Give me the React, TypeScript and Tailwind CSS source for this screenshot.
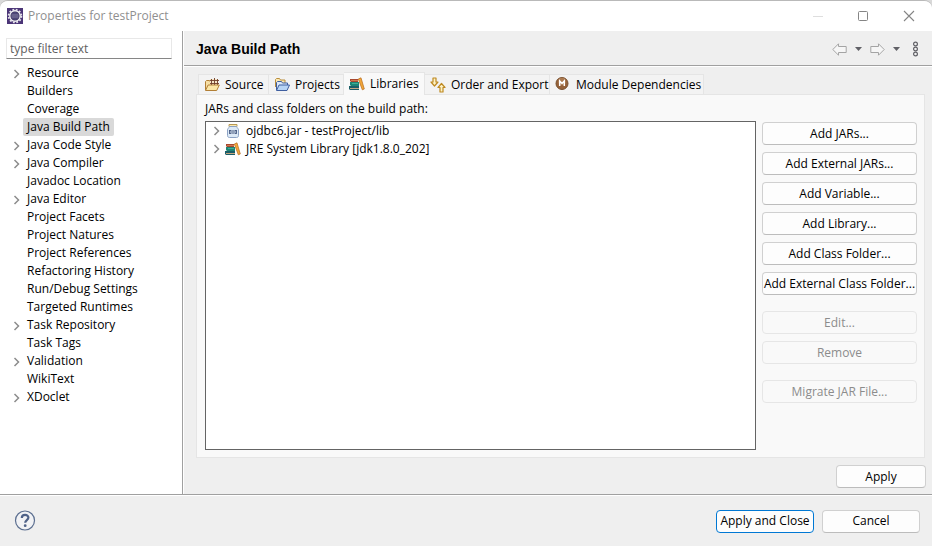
import { useState } from "react";

const pages = [
  { name: "Resource", open: true },
  { name: "Builders" },
  { name: "Coverage" },
  { name: "Java Build Path" },
  { name: "Java Code Style", open: true },
  { name: "Java Compiler", open: true },
  { name: "Javadoc Location" },
  { name: "Java Editor", open: true },
  { name: "Project Facets" },
  { name: "Project Natures" },
  { name: "Project References" },
  { name: "Refactoring History" },
  { name: "Run/Debug Settings" },
  { name: "Targeted Runtimes" },
  { name: "Task Repository", open: true },
  { name: "Task Tags" },
  { name: "Validation", open: true },
  { name: "WikiText" },
  { name: "XDoclet", open: true },
];

const EclipseIcon = () => (
  <svg width="16" height="16" viewBox="0 0 16 16">
    <rect width="16" height="16" fill="#4b3577" />
    <circle cx="8" cy="8" r="6.400" fill="none" stroke="#e4e2ea" strokeWidth="1.800" strokeDasharray="1.8 1.55" />
    <circle cx="8" cy="8" r="5.200" fill="#2d2450" stroke="#f0eff4" strokeWidth="1.400" />
    <circle cx="8" cy="8" r="3.900" fill="#4d4677" />
    <path d="M4.400 7h7.200M4.400 9h7.200" stroke="#8f8bab" strokeWidth="0.800" />
  </svg>
);

const Chevron = () => (
  <svg width="7" height="10" viewBox="0 0 7 10" fill="none" stroke="#8c8c8c" strokeWidth="1.500">
    <path d="M1.500 1l4 4-4 4" />
  </svg>
);

const SourceIcon = () => (
  <svg className="shrink-0" width="16" height="16" viewBox="0 0 16 16" fill="none">
    <path d="M1.500 13V4.500l1-1h3l1 1.500h6V8" fill="#f7dfa4" stroke="#b27f36" />
    <path d="M6 2h8v6H6z" fill="#f6e6c8" />
    <path d="M7.500 2v6M10.500 1v7M13.500 2v6M6 3.500h9M6 6.500h9" stroke="#6e3c28" strokeWidth="0.900" />
    <path d="M1.500 13.500l2.600-5.500h11.200l-2.600 5.500z" fill="#fbe6a6" stroke="#b27f36" />
  </svg>
);

const ProjectsIcon = () => (
  <svg className="shrink-0" width="16" height="16" viewBox="0 0 16 16" fill="none">
    <path d="M1.500 10V2.500l1-1h3l1 1.500h4.500v3" fill="#fae9b4" stroke="#b98d3c" />
    <path d="M2.500 13V5.500l1-1h4l1 1.500h5v2" fill="#dbe8f8" stroke="#3f5fa0" />
    <path d="M2.500 13.500l2.500-5.500h10.500l-2.500 5.500z" fill="#b7d4f5" stroke="#3f5fa0" />
  </svg>
);

const LibraryIcon = () => (
  <svg className="shrink-0" width="16" height="16" viewBox="0 0 16 16">
    <path d="M1 3h8v3H2L1 5z" fill="#a8492f" />
    <path d="M2 4h7v1H2z" fill="#cf7a50" />
    <path d="M1 6h9v4H2L1 9z" fill="#1d8575" />
    <path d="M3 7h6v1H3z" fill="#3fae98" />
    <path d="M0 10h10v4H1l-1-1z" fill="#1b5e68" />
    <path d="M1 12h9v1H1z" fill="#c9a780" />
    <path d="M9.300 3l2.700-1.200 3.300 11.200-2 .8z" fill="#f3a83a" stroke="#b4691c" strokeWidth="0.700" />
  </svg>
);

const OrderIcon = () => (
  <svg className="shrink-0" width="16" height="16" viewBox="0 0 16 16" fill="#fdf2c6" stroke="#bf8a22" strokeWidth="1.200" strokeLinejoin="round">
    <path d="M3 1h3v4h2L4.500 9 1 5h2z" />
    <path d="M10 15h3v-4.500h2L11.500 6.500 8 10.500h2z" />
  </svg>
);

const ModuleIcon = () => (
  <svg className="shrink-0" width="16" height="16" viewBox="0 0 16 16">
    <circle cx="7" cy="6.500" r="6" fill="#95623a" stroke="#78502f" />
    <circle cx="7" cy="4.500" r="3.800" fill="#ab7a50" />
    <path d="M4.700 9v-5L7 6.500l2.300-2.500v5" fill="none" stroke="#fff" strokeWidth="1.500" />
  </svg>
);

const JarIcon = () => (
  <svg width="16" height="16" viewBox="0 0 16 16" fill="none">
    <path d="M4 1.500h8v2H4z" fill="#fbe9b0" stroke="#b99a54" />
    <path d="M4.500 3.500h7c0 1.500 2 1.500 2 3v6c0 1.500-1 2-2 2h-7c-1 0-2-.5-2-2v-6c0-1.500 2-1.500 2-3z" fill="#dce9f6" stroke="#8ba2c4" />
    <rect x="4.500" y="7.500" width="1.500" height="3" stroke="#45597f" strokeWidth="0.900" />
    <path d="M8 7v4" stroke="#45597f" />
    <rect x="10" y="7.500" width="1.500" height="3" stroke="#45597f" strokeWidth="0.900" />
  </svg>
);

const ArrowIcon = ({ className }: { className?: string }) => (
  <svg className={className} width="15" height="13" viewBox="0 0 15 13" fill="#f6f6f6" stroke="#a4a4a4" strokeLinejoin="round">
    <path d="M.8 6.500L6.500.8v2.700h7.700v6H6.500v2.700z" />
  </svg>
);

const DownIcon = () => (
  <svg width="7" height="4" viewBox="0 0 7 4" fill="#606066">
    <path d="M0 0h7L3.500 4z" />
  </svg>
);

const tabs = [
  { name: "Source", icon: <SourceIcon />, width: "w-[71px]" },
  { name: "Projects", icon: <ProjectsIcon />, width: "w-[75px]" },
  { name: "Libraries", icon: <LibraryIcon />, width: "w-[81px]" },
  { name: "Order and Export", icon: <OrderIcon />, width: "w-[125px]" },
  { name: "Module Dependencies", icon: <ModuleIcon />, width: "w-[154px]" },
];

type ButtonProps = { name: string; disabled?: boolean; primary?: boolean; className?: string };

const Button = ({ name, disabled, primary, className = "" }: ButtonProps) => (
  <button
    disabled={disabled}
    className={`h-[23px] shrink-0 rounded-[4px] border bg-[#fdfdfd] whitespace-nowrap disabled:border-[#e6e6e6] disabled:bg-[#f9f9f9] disabled:text-[#8c8c8c] ${
      primary ? "border-[#0078d4]" : "border-[#d0d0d0] border-b-[#bcbcbc]"
    } ${className}`}
  >
    {name}
  </button>
);

const App = () => {
  const [page, setPage] = useState<string>("Java Build Path");
  const [tab, setTab] = useState<string>("Libraries");
  const [filter, setFilter] = useState<string>("");

  return (
    <div className="bg-[#d9d9d9] min-h-screen flex font-['Open_Sans','Noto_Sans',sans-serif] text-[12px] leading-[18px] text-black">
      <div className="flex-1 flex flex-col rounded-t-[8px] overflow-hidden border-t border-[#b9b9b9] bg-[#efefef]">
        {/* title bar */}
        <div className="h-[30px] flex items-center bg-white pl-[7px] pr-[17px] text-[#8f8f8f]">
          <EclipseIcon />
          <span className="ml-[5px] flex-1">Properties for testProject</span>
          <button aria-label="Minimize">
            <svg width="12" height="12" stroke="#dedede">
              <path d="M1 6.500h10" />
            </svg>
          </button>
          <button aria-label="Maximize" className="ml-[33px]">
            <svg width="12" height="12" fill="none" stroke="#858585">
              <rect x="1.500" y="1.500" width="9" height="9" rx="1" />
            </svg>
          </button>
          <button aria-label="Close" className="ml-[34px]">
            <svg width="12" height="12" stroke="#858585" strokeWidth="1.100">
              <path d="M1 1l10 10M11 1L1 11" />
            </svg>
          </button>
        </div>

        <div className="flex-1 flex">
          {/* page tree */}
          <div className="w-[183px] shrink-0 bg-white border-r border-[#a0a0a0] pl-[6px] pr-[10px] pt-[7px]">
            <input
              aria-label="type filter text"
              placeholder="type filter text"
              className="block w-full h-[21px] px-[3px] border border-[#e8e8e8] border-b-[#868686] bg-white outline-none placeholder:text-[#606060]"
              value={filter}
              onChange={(e: React.ChangeEvent<HTMLInputElement>) => setFilter(e.target.value)}
            />
            <ul className="mt-[5px]">
              {pages
                .filter((el) => el.name.toLowerCase().includes(filter.toLowerCase()))
                .map((el) => (
                  <li key={el.name} className="flex h-[18px] pl-[7px]">
                    <span className="w-[10px] pt-[5px]">{el.open && <Chevron />}</span>
                    <button
                      onClick={() => setPage(el.name)}
                      className={`px-[4px] rounded-[2px] whitespace-nowrap ${page === el.name ? "bg-[#d9d9d9]" : ""}`}
                    >
                      {el.name}
                    </button>
                  </li>
                ))}
            </ul>
          </div>

          <div className="flex-1 flex flex-col border-l border-white">
            <div className="h-[35px] flex items-center border-b border-[#a0a0a0] pl-[12px] pr-[13px] pt-[2px]">
              <h1 className="flex-1 font-['Liberation_Sans',sans-serif] text-[14px] font-bold">Java Build Path</h1>
              <button aria-label="Back">
                <ArrowIcon />
              </button>
              <button aria-label="Back history" className="ml-[8px]">
                <DownIcon />
              </button>
              <button aria-label="Forward" className="ml-[8px]">
                <ArrowIcon className="rotate-180" />
              </button>
              <button aria-label="Forward history" className="ml-[8px]">
                <DownIcon />
              </button>
              <button aria-label="Menu" className="ml-[12px]">
                <svg width="7" height="16" fill="none" stroke="#606066" strokeWidth="1.200">
                  <circle cx="3.500" cy="3" r="1.900" />
                  <circle cx="3.500" cy="8" r="1.900" />
                  <circle cx="3.500" cy="13" r="1.900" />
                </svg>
              </button>
            </div>

            <div className="flex-1 flex flex-col border-t border-white pl-[12px] pr-[7px] pt-[5px]">
              {/* tabs */}
              <div className="flex items-end pl-[2px]">
                {tabs.map((el) => (
                  <button
                    key={el.name}
                    onClick={() => setTab(el.name)}
                    className={`flex items-center gap-[5px] pl-[5px] whitespace-nowrap border-t border-r border-[#e5e5e5] first:border-l ${el.width} ${
                      tab === el.name ? "relative h-[23px] -mb-px bg-[#f9f9f9]" : "h-[20px] bg-[#f3f3f3]"
                    }`}
                  >
                    {el.icon}
                    {el.name}
                  </button>
                ))}
              </div>

              <div className="flex-1 flex flex-col border border-[#e5e5e5] bg-[#f9f9f9] pl-[8px] pr-[7px] pt-[5px] pb-[7px]">
                <div>JARs and class folders on the build path:</div>
                <div className="flex-1 flex mt-[3px]">
                  <ul className="flex-1 border border-[#646464] bg-white pl-[7px]">
                    <li className="flex items-center h-[18px]">
                      <Chevron />
                      <span className="ml-[5px] mr-[5px]">
                        <JarIcon />
                      </span>
                      ojdbc6.jar - testProject/lib
                    </li>
                    <li className="flex items-center h-[18px]">
                      <Chevron />
                      <span className="ml-[5px] mr-[5px]">
                        <LibraryIcon />
                      </span>
                      JRE System Library [jdk1.8.0_202]
                    </li>
                  </ul>
                  <div className="w-[155px] ml-[6px] flex flex-col gap-[7px] pt-px">
                    <Button name="Add JARs..." />
                    <Button name="Add External JARs..." />
                    <Button name="Add Variable..." />
                    <Button name="Add Library..." />
                    <Button name="Add Class Folder..." />
                    <Button name="Add External Class Folder..." />
                    <Button name="Edit..." disabled className="mt-[9px]" />
                    <Button name="Remove" disabled />
                    <Button name="Migrate JAR File..." disabled className="mt-[9px]" />
                  </div>
                </div>
              </div>
            </div>

            <div className="flex justify-end pt-[7px] pb-[6px] pr-[6px]">
              <Button name="Apply" className="w-[90px]" />
            </div>
          </div>
        </div>

        {/* footer */}
        <div className="border-t border-[#a0a0a0]">
          <div className="h-[51px] border-t border-white flex items-center gap-[8px] pl-[14px] pr-[12px]">
            <button aria-label="Help" className="mr-auto">
              <svg width="22" height="22" viewBox="0 0 22 22" fill="none">
                <circle cx="11" cy="10.500" r="9.500" fill="#f1f2f5" stroke="#5c6f90" strokeWidth="1.200" />
                <path d="M7.800 8c0-4.300 6.600-4 6.600-.4 0 2.400-3.200 2.500-3.200 5.200" stroke="#4f6288" strokeWidth="2.200" />
                <circle cx="11.200" cy="15.700" r="1.400" fill="#4f6288" />
              </svg>
            </button>
            <Button name="Apply and Close" primary className="w-[98px]" />
            <Button name="Cancel" className="w-[98px]" />
          </div>
        </div>
      </div>
    </div>
  );
};

export default App;
